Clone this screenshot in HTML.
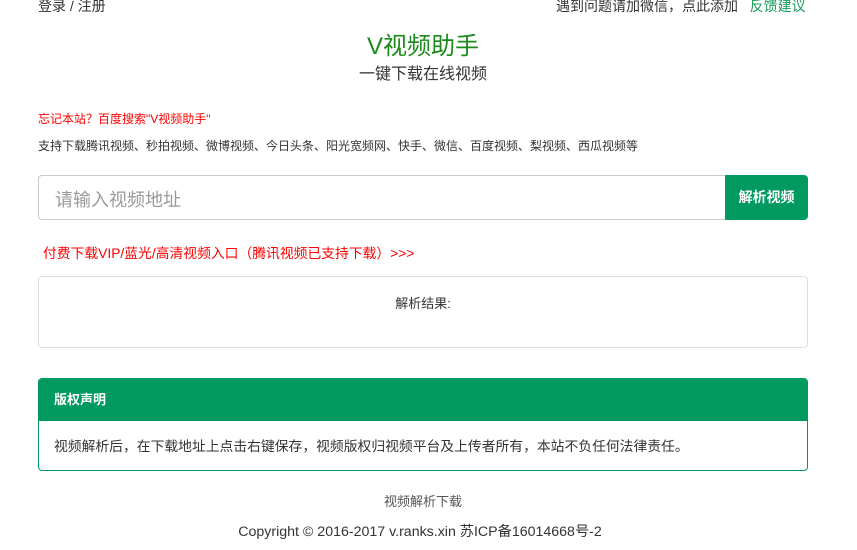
<!DOCTYPE html>
<html><head><meta charset="utf-8"><style>
body{margin:0;width:857px;height:550px;overflow:hidden;background:#fff;font-family:"Liberation Sans","Noto Sans CJK SC",sans-serif;color:#333;position:relative}
.a{position:absolute;white-space:nowrap}
</style></head><body>
<div class="a" style="left:38px;top:-4px;font-size:14px">登录 / 注册</div>
<div class="a" style="left:556px;top:-4px;font-size:14px">遇到问题请加微信，点此添加 &nbsp;&nbsp;<span style="color:#1a9a5a">反馈建议</span></div>
<div class="a" style="left:0;width:846px;text-align:center;top:26px;font-size:24px;color:#1b8a1b">V视频助手</div>
<div class="a" style="left:0;width:846px;text-align:center;top:60px;font-size:16px">一键下载在线视频</div>
<div class="a" style="left:38px;top:110px;font-size:12px;color:#f00">忘记本站？百度搜索"V视频助手"</div>
<div class="a" style="left:38px;top:137px;font-size:12px">支持下载腾讯视频、秒拍视频、微博视频、今日头条、阳光宽频网、快手、微信、百度视频、梨视频、西瓜视频等</div>
<div class="a" style="left:38px;top:175px;width:687px;height:45px;border:1px solid #ccc;border-right:none;border-radius:4px 0 0 4px;box-sizing:border-box"></div>
<div class="a" style="left:55px;top:186px;font-size:18px;color:#999">请输入视频地址</div>
<div class="a" style="left:725px;top:175px;width:83px;height:45px;background:#009a61;border-radius:0 4px 4px 0;color:#fff;font-size:14px;font-weight:bold;line-height:45px;text-align:center">解析视频</div>
<div class="a" style="left:43px;top:242px;font-size:13.8px;color:#f00">付费下载VIP/蓝光/高清视频入口（腾讯视频已支持下载）&gt;&gt;&gt;</div>
<div class="a" style="left:38px;top:276px;width:770px;height:72px;border:1px solid #ddd;border-radius:4px;box-sizing:border-box"></div>
<div class="a" style="left:0;width:846px;text-align:center;top:293px;font-size:13px">解析结果:</div>
<div class="a" style="left:38px;top:378px;width:770px;height:93px;border:1px solid #009a61;border-radius:4px;box-sizing:border-box;overflow:hidden">
<div style="background:#009a61;height:42px;color:#fff;font-size:13px;font-weight:bold;line-height:42px;padding-left:15px">版权声明</div>
<div style="font-size:13.8px;padding:14px 0 0 15px">视频解析后，在下载地址上点击右键保存，视频版权归视频平台及上传者所有，本站不负任何法律责任。</div>
</div>
<div class="a" style="left:0;width:846px;text-align:center;top:491px;font-size:13px;color:#555">视频解析下载</div>
<div class="a" style="left:-3px;width:846px;text-align:center;top:521px;font-size:14.2px">Copyright © 2016-2017 v.ranks.xin 苏ICP备16014668号-2</div>
</body></html>
